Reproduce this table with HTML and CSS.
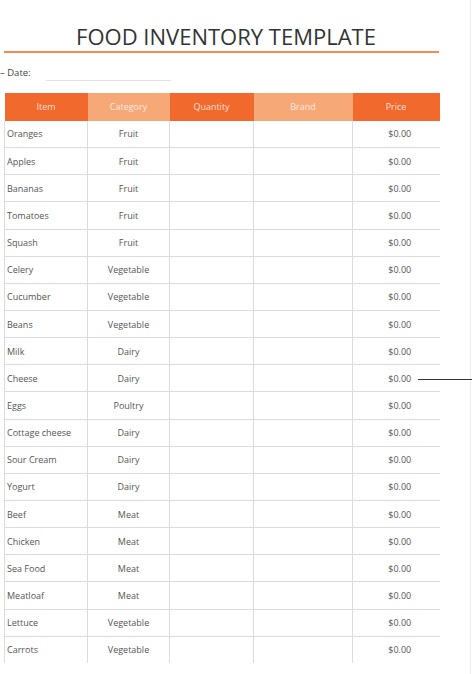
FILE: index.html
```html
<!DOCTYPE html>
<html lang="en">
<head>
<meta charset="utf-8">
<title>Food Inventory Template</title>
<link rel="stylesheet" href="styles.css">
</head>
<body>
<div class="sheet">
<div class="page">
  <h1 class="title">FOOD INVENTORY TEMPLATE</h1>
  <div class="rule"></div>
  <div class="date-row"><span class="date-label">– Date:</span><span class="date-blank"></span></div>
  <table class="inv">
    <colgroup>
      <col class="c-item"><col class="c-cat"><col class="c-qty"><col class="c-brand"><col class="c-price">
    </colgroup>
    <thead>
      <tr>
        <th class="dark">Item</th>
        <th class="light">Category</th>
        <th class="dark">Quantity</th>
        <th class="light">Brand</th>
        <th class="dark">Price</th>
      </tr>
    </thead>
    <tbody>
      <tr><td class="item">Oranges</td><td class="cat">Fruit</td><td></td><td></td><td class="price">$0.00</td></tr>
      <tr><td class="item">Apples</td><td class="cat">Fruit</td><td></td><td></td><td class="price">$0.00</td></tr>
      <tr><td class="item">Bananas</td><td class="cat">Fruit</td><td></td><td></td><td class="price">$0.00</td></tr>
      <tr><td class="item">Tomatoes</td><td class="cat">Fruit</td><td></td><td></td><td class="price">$0.00</td></tr>
      <tr><td class="item">Squash</td><td class="cat">Fruit</td><td></td><td></td><td class="price">$0.00</td></tr>
      <tr><td class="item">Celery</td><td class="cat">Vegetable</td><td></td><td></td><td class="price">$0.00</td></tr>
      <tr><td class="item">Cucumber</td><td class="cat">Vegetable</td><td></td><td></td><td class="price">$0.00</td></tr>
      <tr><td class="item">Beans</td><td class="cat">Vegetable</td><td></td><td></td><td class="price">$0.00</td></tr>
      <tr><td class="item">Milk</td><td class="cat">Dairy</td><td></td><td></td><td class="price">$0.00</td></tr>
      <tr><td class="item">Cheese</td><td class="cat">Dairy</td><td></td><td></td><td class="price">$0.00</td></tr>
      <tr><td class="item">Eggs</td><td class="cat">Poultry</td><td></td><td></td><td class="price">$0.00</td></tr>
      <tr><td class="item">Cottage cheese</td><td class="cat">Dairy</td><td></td><td></td><td class="price">$0.00</td></tr>
      <tr><td class="item">Sour Cream</td><td class="cat">Dairy</td><td></td><td></td><td class="price">$0.00</td></tr>
      <tr><td class="item">Yogurt</td><td class="cat">Dairy</td><td></td><td></td><td class="price">$0.00</td></tr>
      <tr><td class="item">Beef</td><td class="cat">Meat</td><td></td><td></td><td class="price">$0.00</td></tr>
      <tr><td class="item">Chicken</td><td class="cat">Meat</td><td></td><td></td><td class="price">$0.00</td></tr>
      <tr><td class="item">Sea Food</td><td class="cat">Meat</td><td></td><td></td><td class="price">$0.00</td></tr>
      <tr><td class="item">Meatloaf</td><td class="cat">Meat</td><td></td><td></td><td class="price">$0.00</td></tr>
      <tr><td class="item">Lettuce</td><td class="cat">Vegetable</td><td></td><td></td><td class="price">$0.00</td></tr>
      <tr><td class="item">Carrots</td><td class="cat">Vegetable</td><td></td><td></td><td class="price">$0.00</td></tr>
    </tbody>
  </table>
</div>
</div>
<div class="pointer"></div>
</body>
</html>
```

FILE: styles.css
```css
html, body {
  margin: 0;
  padding: 0;
  background: #ffffff;
}
body {
  position: relative;
  width: 472px;
  height: 674px;
  overflow: hidden;
  font-family: "Open Sans", "Liberation Sans", sans-serif;
  color: #555;
}
.sheet {
  width: 470px;
  height: 674px;
  border-right: 1px solid #eeeeee;
}
.page {
  width: 435px;
  margin-left: 4px;
  padding-top: 25px;
}
.title {
  margin: 0;
  padding-left: 9px;
  font-size: 22px;
  line-height: 22px;
  font-weight: 400;
  color: #333;
  text-align: center;
  white-space: nowrap;
}
.rule {
  margin-top: 4px;
  height: 1.5px;
  background: #f28b55;
}
.date-row {
  display: flex;
  align-items: center;
  margin-left: -4px;
  margin-top: 14px;
  height: 12px;
}
.date-label {
  font-size: 9.5px;
  line-height: 12px;
  color: #444;
}
.date-blank {
  width: 125px;
  margin-left: 15px;
  height: 12px;
  border-bottom: 1px solid #e2e2e2;
  box-sizing: border-box;
  transform: translateY(2px);
}
.inv {
  margin-top: 14px;
  width: 435px;
  border-collapse: collapse;
  table-layout: fixed;
}
.c-item { width: 83px; }
.c-cat { width: 82px; }
.c-qty { width: 84px; }
.c-brand { width: 99px; }
.c-price { width: 87px; }
.inv th {
  height: 28px;
  padding: 0;
  font-size: 9px;
  font-weight: 400;
  color: rgba(255, 255, 255, 0.8);
  text-align: center;
}
.inv th.dark { background: #f2692d; }
.inv th.light { background: #f6a877; }
.inv td {
  height: 27.15px;
  padding: 0;
  font-size: 9px;
  color: #555;
  border-left: 1px solid #dcdcdc;
  border-bottom: 1px solid #dcdcdc;
  box-sizing: border-box;
}
.inv tbody tr:last-child td {
  border-bottom: none;
}
.inv td.item {
  padding-left: 2px;
  text-align: left;
}
.inv td.cat {
  text-align: center;
}
.inv td.price {
  text-align: center;
  padding-left: 7px;
}
.pointer {
  position: absolute;
  left: 418px;
  top: 379px;
  width: 54px;
  height: 1px;
  background: #333;
}
```
